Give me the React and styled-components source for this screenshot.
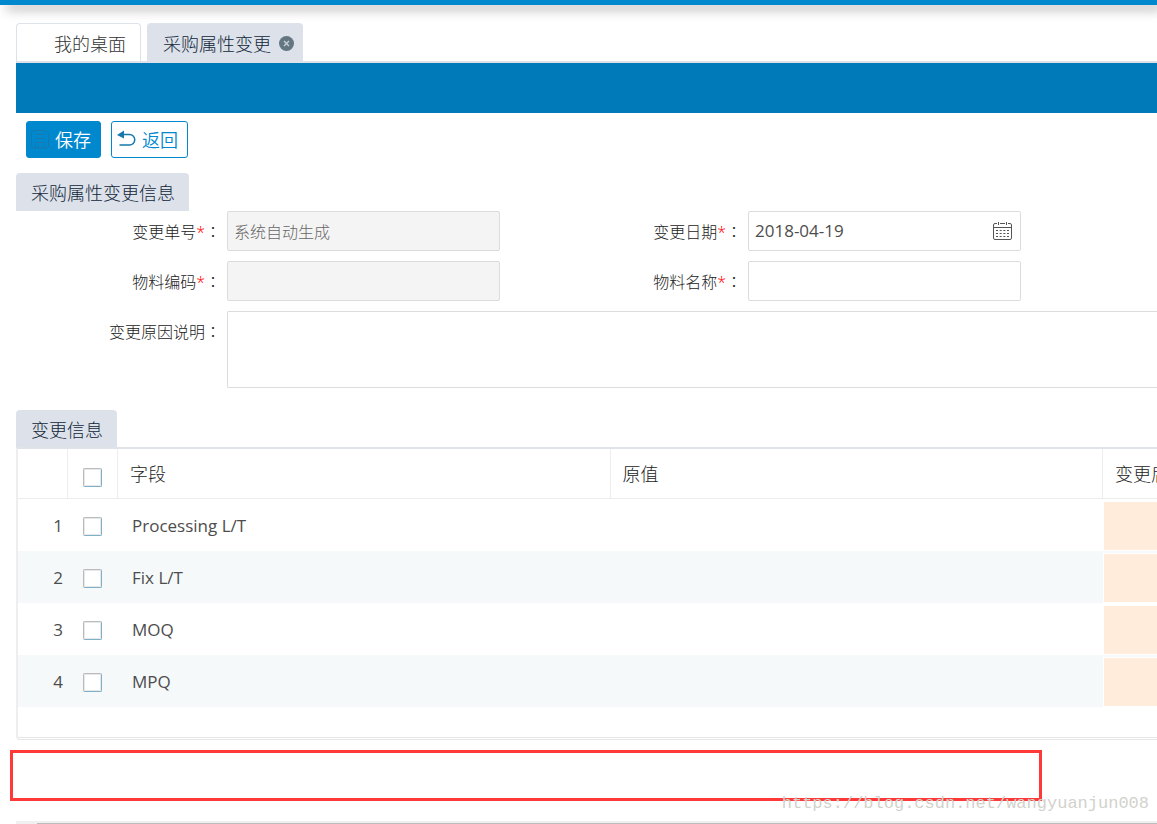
import styled, { createGlobalStyle, css } from "styled-components";

const GlobalStyle = createGlobalStyle`
  * {
    box-sizing: border-box;
  }

  body {
    margin: 0;
    background-color: #fff;
    color: #454545;
    font-family: "Noto Sans CJK SC", sans-serif;
    font-size: 16px;
    font-weight: 300;
    overflow: hidden;
  }

  button,
  input,
  textarea {
    font: inherit;
  }
`;

const StyledApp = styled.div`
  position: relative;
  min-height: 100vh;
  display: flex;
  flex-direction: column;
  overflow: hidden;
`;

const TopBar = styled.header`
  height: 5px;
  background-color: #0088cf;
  box-shadow: 6px 4px 12px rgba(0, 0, 0, 0.4);
`;

const Main = styled.main`
  padding: 18px 0 0 16px;
`;

const TabList = styled.nav`
  display: flex;
  gap: 6px;
  border-bottom: 2px solid #dde1e9;
`;

const Tab = styled.div`
  display: flex;
  align-items: center;
  gap: 8px;
  height: 38px;
  padding: 2px 9px 0 16px;
  border-radius: 4px 4px 0 0;
  background-color: #dde1e9;

  ${({ $home }) =>
    $home &&
    css`
      padding: 0 14px 0 37px;
      border: 1px solid #dde1e9;
      border-bottom: none;
      background-color: #fff;
    `}
`;

const TabLink = styled.a`
  color: ${({ $active }) => ($active ? "#10263b" : "#333")};
  font-size: 18px;
  line-height: 36px;
  text-decoration: none;
`;

const CloseButton = styled.button`
  display: flex;
  padding: 0;
  border: none;
  background: none;
`;

const Banner = styled.div`
  height: 50px;
  background-color: #007ab8;
`;

const Toolbar = styled.div`
  display: flex;
  gap: 10px;
  padding: 8px 10px 15px;
`;

const Button = styled.button`
  display: flex;
  align-items: center;
  gap: 5px;
  height: 37px;
  padding: 0 9px 0 4px;
  border: 1px solid #0088cf;
  border-radius: 3px;
  background-color: ${({ $primary }) => ($primary ? "#0088cf" : "#fff")};
  color: ${({ $primary }) => ($primary ? "#fff" : "#0088cf")};
  font-size: 18px;
  font-weight: 350;
  line-height: 35px;
`;

const SectionTitle = styled.h2`
  width: fit-content;
  height: 38px;
  margin: 0;
  padding: 1px 14px 0 15px;
  border-radius: 4px 4px 0 0;
  background-color: #dde1e9;
  color: #10263b;
  font-size: 18px;
  font-weight: 300;
  line-height: 36px;
`;

const Form = styled.form`
  display: grid;
  grid-template-columns: 205px 1fr 236px 1fr 130px;
  gap: 10px 6px;
  margin-bottom: 22px;
`;

const Label = styled.label`
  height: 40px;
  color: #222;
  line-height: 40px;
  text-align: right;
`;

const Star = styled.span`
  color: #f00;
  font-family: "Open Sans", sans-serif;
`;

// the traditional face centres the full-width colon
const Colon = styled.span`
  font-family: "Noto Sans CJK TC", sans-serif;
`;

const fieldStyle = css`
  width: 100%;
  min-width: 0;
  padding: 0 6px;
  border: 1px solid #dcdcdc;
  border-radius: 2px;
  background-color: #fff;
  color: #454545;
  outline: none;
`;

const Input = styled.input`
  ${fieldStyle}
  height: 40px;

  &:read-only {
    background-color: #f4f4f4;
    color: #666;
  }
`;

const DateField = styled.div`
  ${fieldStyle}
  display: flex;
  align-items: center;
  height: 40px;
  padding-right: 8px;

  & input {
    flex: 1;
    min-width: 0;
    padding: 0;
    border: none;
    color: #4d4d4d;
    font-family: "Open Sans", sans-serif;
    font-size: 17px;
    font-weight: 400;
    line-height: 38px;
    outline: none;
  }

  & button {
    display: flex;
    padding: 0;
    border: none;
    background: none;
  }
`;

const TextArea = styled.textarea`
  ${fieldStyle}
  grid-column: 2 / -1;
  height: 77px;
  border-right: none;
  border-radius: 2px 0 0 2px;
  resize: none;
`;

const GridBox = styled.div`
  height: 293px;
  margin-top: -1px;
  border: 2px solid #eee;
  border-top-color: #dfe2e6;
  border-bottom: 3px double #e6e6e6;
  border-right: none;
  border-radius: 0 0 0 4px;
`;

const Table = styled.table`
  width: 100%;
  table-layout: fixed;
  border-collapse: separate;
  border-spacing: 0;
`;

const Th = styled.th`
  width: ${({ $width }) => $width};
  height: 50px;
  padding: 0 0 2px 12px;
  border-right: 1px solid #ededed;
  border-bottom: 1px solid #ededed;
  color: #222;
  font-size: 18px;
  font-weight: 300;
  text-align: left;
  white-space: nowrap;
  overflow: hidden;

  &:last-child {
    border-right: none;
  }
`;

const CheckTh = styled(Th)`
  padding: 7px 0 0 15px;
`;

const Row = styled.tr`
  &:nth-child(even) {
    background-color: #f5f9fa;
  }
`;

const Td = styled.td`
  height: 52px;
  padding: 0 0 0 14px;
  color: #4d4d4d;
  font-family: "Open Sans", sans-serif;
  font-size: 17px;
  font-weight: 400;
`;

const NumberCell = styled(Td)`
  padding: 0 5px 0 0;
  text-align: right;
`;

const CheckCell = styled(Td)`
  padding: 2px 0 0 15px;
`;

const EditCell = styled(Td)`
  padding: 2px 0 0;

  & div {
    height: 50px;
    border: 1px solid #fff;
    border-right: none;
    background-color: #ffecdb;
  }
`;

const CheckBox = styled.input`
  appearance: none;
  display: block;
  width: 19px;
  height: 19px;
  margin: 0;
  border: 1px solid #bbb;
  border-right-color: #7fb0c8;
  border-bottom-color: #7fb0c8;
  border-radius: 2px;
  background-color: #fff;
  box-shadow: inset 0 0 0 1px #e8e8e8;
`;

const Highlight = styled.div`
  height: 51px;
  margin: 10px 115px 20px -6px;
  border: 3px solid #ff3838;
`;

const ScrollTrack = styled.div`
  height: 3px;
  padding: 2px 0 0 21px;
  background-color: #f0f0f0;

  & div {
    height: 1px;
    background-color: #bcbcbc;
  }
`;

const Watermark = styled.p`
  position: absolute;
  right: 8px;
  bottom: 9px;
  margin: 0;
  color: #d2d2cc;
  font-family: "Liberation Mono", monospace;
  font-size: 17px;
  font-weight: 400;
  line-height: 22px;
`;

const rows = ["Processing L/T", "Fix L/T", "MOQ", "MPQ"];

function CloseIcon() {
  return (
    <svg width="15" height="15" viewBox="0 0 15 15" aria-hidden="true">
      <circle cx="7.5" cy="7.5" r="7.5" fill="#647681" />
      <path d="M5 5l5 5M10 5l-5 5" stroke="#c8d0d8" strokeWidth="1.4" />
    </svg>
  );
}

function SaveIcon() {
  return (
    <svg
      width="19"
      height="20"
      viewBox="0 0 19 20"
      fill="none"
      stroke="#1678ac"
      aria-hidden="true"
    >
      <path d="M2.5 .5h11.5l3.500 3.500v12q0 2-2 2h-13q-2 0-2-2v-13.500q0-2 2-2z" />
      <path d="M4.500 4.500h9M4.500 8.500h9M4.500 18v-5.500h9v5.500M7.500 15v3" />
    </svg>
  );
}

function BackIcon() {
  return (
    <svg width="21" height="20" viewBox="-1 0 21 20" aria-hidden="true">
      <path d="M0 5l7-4.500v8z" fill="#1678ac" />
      <path
        d="M6 4.500h6.500a5 5 0 0 1 0 10.500H2.500"
        fill="none"
        stroke="#1678ac"
        strokeWidth="1.500"
      />
    </svg>
  );
}

function CalendarIcon() {
  return (
    <svg
      width="19"
      height="20"
      viewBox="0 0 19 20"
      fill="none"
      stroke="#555"
      aria-hidden="true"
    >
      <path d="M4 2.500H2q-1.500 0-1.500 1.500v13q0 1.500 1.500 1.500h15q1.500 0 1.500-1.500v-13q0-1.500-1.500-1.500h-2M7 2.500h5M1 6.500h17" />
      <path d="M5.500 1v3M13.500 1v3" />
      <path d="M3 9.500h13M3 12.500h13M3 15.500h13" strokeDasharray="2 1.670" />
    </svg>
  );
}

function FormLabel({ id, text, required }) {
  return (
    <Label htmlFor={id}>
      {text}
      {required && <Star>*</Star>}
      <Colon lang="zh-TW">：</Colon>
    </Label>
  );
}

function App() {
  return (
    <StyledApp lang="zh-CN">
      <GlobalStyle />
      <TopBar />
      <Main>
        <TabList>
          <Tab $home>
            <TabLink href="#desktop">我的桌面</TabLink>
          </Tab>
          <Tab>
            <TabLink href="#change" $active>
              采购属性变更
            </TabLink>
            <CloseButton type="button" aria-label="关闭">
              <CloseIcon />
            </CloseButton>
          </Tab>
        </TabList>
        <Banner />

        <Toolbar>
          <Button type="button" $primary>
            <SaveIcon />
            保存
          </Button>
          <Button type="button">
            <BackIcon />
            返回
          </Button>
        </Toolbar>

        <SectionTitle>采购属性变更信息</SectionTitle>
        <Form>
          <FormLabel id="number" text="变更单号" required />
          <Input id="number" defaultValue="系统自动生成" readOnly />
          <FormLabel id="date" text="变更日期" required />
          <DateField>
            <input id="date" defaultValue="2018-04-19" />
            <button type="button" aria-label="选择日期">
              <CalendarIcon />
            </button>
          </DateField>
          <span />

          <FormLabel id="code" text="物料编码" required />
          <Input id="code" readOnly />
          <FormLabel id="name" text="物料名称" required />
          <Input id="name" />
          <span />

          <FormLabel id="reason" text="变更原因说明" />
          <TextArea id="reason" />
        </Form>

        <SectionTitle>变更信息</SectionTitle>
        <GridBox>
          <Table>
            <thead>
              <tr>
                <Th $width="50px" />
                <CheckTh $width="50px">
                  <CheckBox type="checkbox" aria-label="全选" />
                </CheckTh>
                <Th>字段</Th>
                <Th>原值</Th>
                <Th $width="54px">变更后</Th>
              </tr>
            </thead>
            <tbody>
              {rows.map((name, i) => (
                <Row key={name}>
                  <NumberCell>{i + 1}</NumberCell>
                  <CheckCell>
                    <CheckBox type="checkbox" aria-label={name} />
                  </CheckCell>
                  <Td>{name}</Td>
                  <Td />
                  <EditCell>
                    <div />
                  </EditCell>
                </Row>
              ))}
            </tbody>
          </Table>
        </GridBox>

        <Highlight />
        <ScrollTrack>
          <div />
        </ScrollTrack>
      </Main>
      <Watermark>https://blog.csdn.net/wangyuanjun008</Watermark>
    </StyledApp>
  );
}

export default App;
